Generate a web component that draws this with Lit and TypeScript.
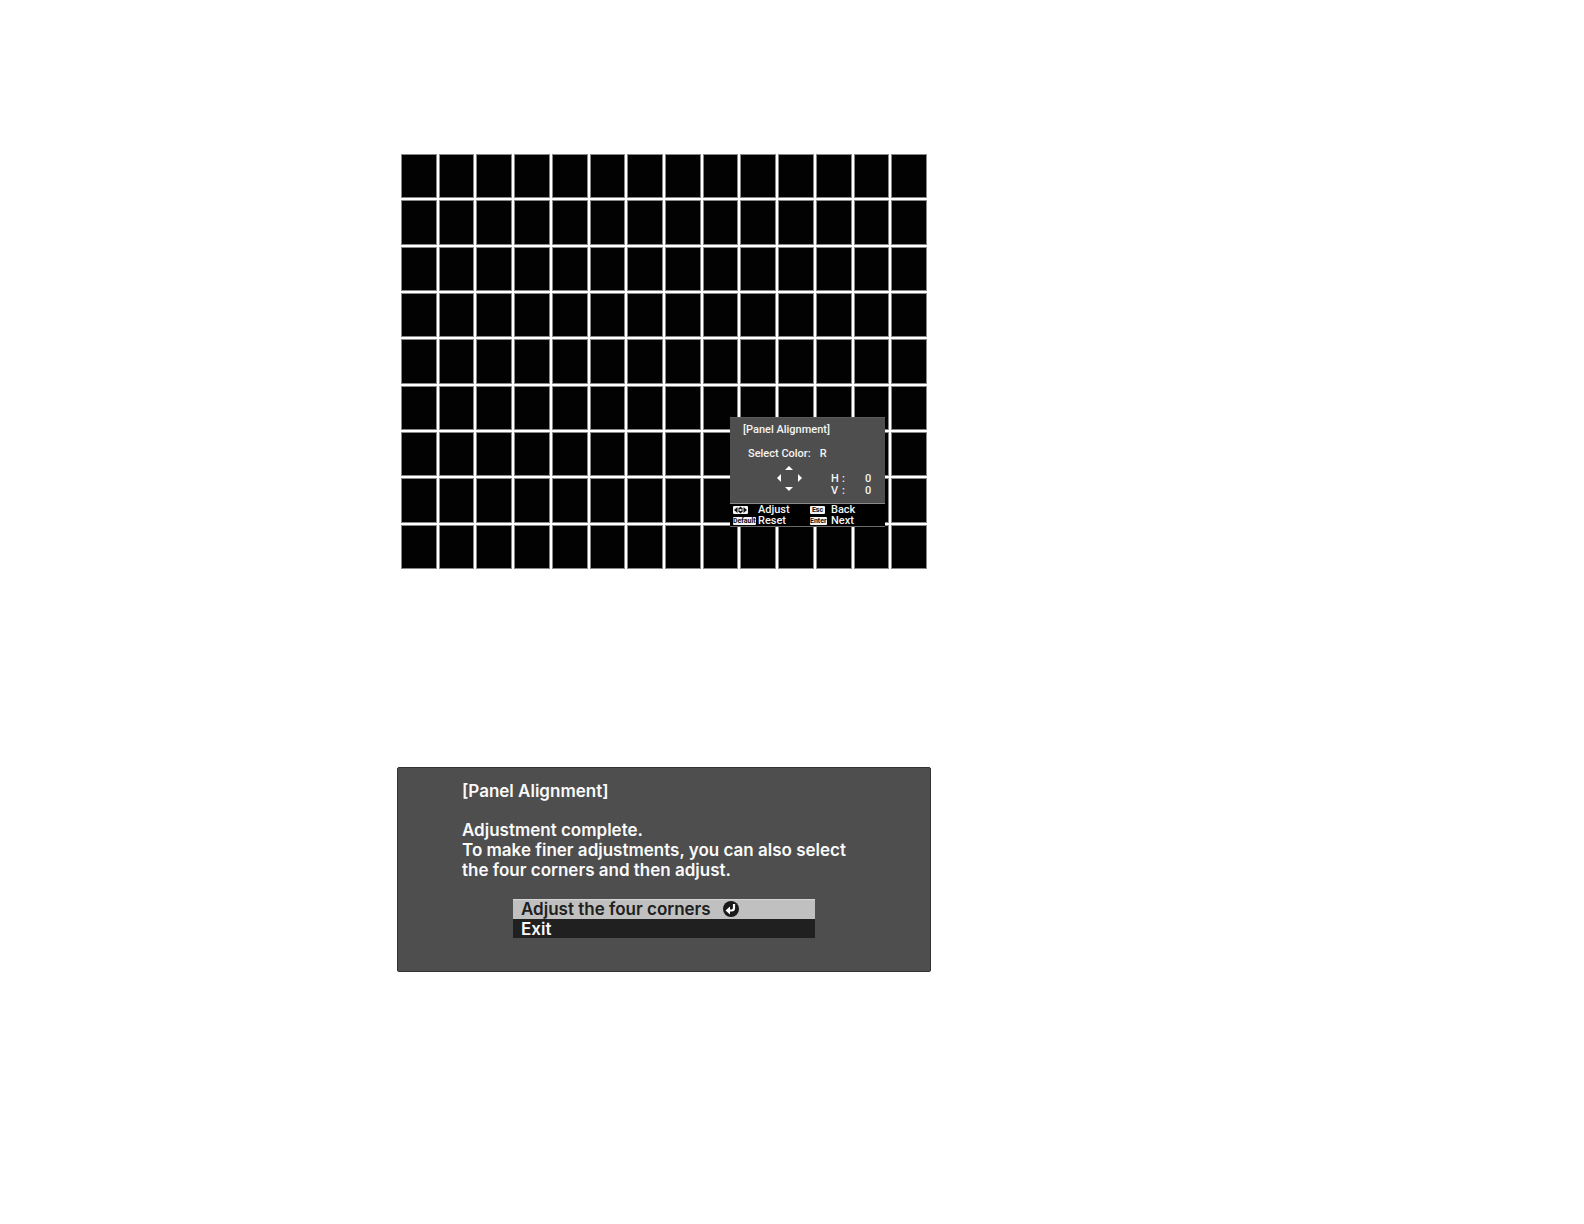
import { LitElement, html, svg, css } from "lit";
import { customElement, state } from "lit/decorators.js";

const COLUMNS = 14;
const ROWS = 9;

@customElement("alignment-panel")
class AlignmentPanel extends LitElement {
  static styles = css`
    :host {
      display: block;
      color: #f4f4f4;
      background: #4e4e4e;
      font: 500 11px/12px Roboto, "Liberation Sans", sans-serif;
    }
    .body {
      padding: 6px 13px 6px 13px;
      border-top: 1px solid #5c5c5c;
    }
    .title {
      margin: 0;
      font: inherit;
    }
    .color {
      margin: 12px 0 4px 5px;
      display: flex;
      gap: 9px;
    }
    .values {
      display: flex;
      justify-content: space-between;
      align-items: flex-end;
      padding-left: 32px;
    }
    .arrows {
      display: block;
      width: 28px;
      height: 28px;
      margin-bottom: 5px;
    }
    .numbers {
      display: grid;
      grid-template-columns: 11px 23px 7px;
      margin: 0;
    }
    .numbers dt,
    .numbers dd {
      margin: 0;
    }
    .keys {
      display: grid;
      grid-template-columns: 77px 1fr;
      grid-template-rows: 12px 10px;
      background: #000;
      border-top: 1px solid #8a8a8a;
      border-bottom: 1px solid #6a6a6a;
      padding-left: 3px;
    }
    .key {
      display: grid;
      grid-template-columns: 25px 1fr;
      align-items: center;
      align-content: center;
    }
    .key.short {
      grid-template-columns: 21px 1fr;
    }
    .cap {
      justify-self: start;
      box-sizing: border-box;
      min-width: 15px;
      height: 8px;
      border-radius: 1px;
      background: #f4f4f4;
      color: #111;
      font: 700 7px/8px Roboto, "Liberation Sans", sans-serif;
      text-align: center;
    }
    .cap svg {
      display: block;
    }
  `;

  render() {
    return html`
      <div class="body">
        <h2 class="title">[Panel Alignment]</h2>
        <div class="color"><span>Select Color:</span><span>R</span></div>
        <div class="values">
          <svg class="arrows" viewBox="0 0 28 28" fill="#fff" aria-hidden="true">
            <path d="M14 2l4 4h-8zM14 27l4-4h-8zM2 14l4-4v8zM27 14l-4-4v8z" />
          </svg>
          <dl class="numbers">
            <dt>H</dt><dd>:</dd><dd>0</dd>
            <dt>V</dt><dd>:</dd><dd>0</dd>
          </dl>
        </div>
      </div>
      <div class="keys">
        <div class="key">
          <span class="cap">
            <svg width="15" height="8" viewBox="0 0 15 8" fill="#111" aria-hidden="true">
              <path d="M1 4l3.500-3v6zM14 4l-3.500-3v6zM7.500 0.500l2.500 2.500h-5zM7.500 7.500l2.500-2.500h-5z" />
              <path d="M5.500 2.500h1v3h-1zM8.500 2.500h1v3h-1z" />
            </svg>
          </span>
          <span>Adjust</span>
        </div>
        <div class="key short"><span class="cap">Esc</span><span>Back</span></div>
        <div class="key"><span class="cap">Default</span><span>Reset</span></div>
        <div class="key short"><span class="cap">Enter</span><span>Next</span></div>
      </div>
    `;
  }
}

@customElement("corner-dialog")
class CornerDialog extends LitElement {
  static options = ["Adjust the four corners", "Exit"];

  @state() private selected = 0;

  static styles = css`
    :host {
      display: block;
      padding: 13px 64px 33px;
      border: 1px solid #333;
      border-radius: 2px;
      background: #4e4e4e;
      color: #fafafa;
      font: 600 17px/20px Inter, "Liberation Sans", sans-serif;
    }
    .title,
    .message {
      margin: 0 0 19px;
      font: inherit;
    }
    .options {
      display: flex;
      flex-direction: column;
      margin: 0 51px;
    }
    .option {
      display: flex;
      align-items: center;
      gap: 12px;
      height: 19px;
      padding: 0 8px;
      border: 0;
      background: #202020;
      color: #fafafa;
      font: inherit;
      text-align: left;
    }
    .option.selected {
      height: 20px;
      background: #c0c0c0;
      box-shadow: inset 0 1px #d4d4d4;
      color: #202020;
    }
  `;

  render() {
    return html`
      <h2 class="title">[Panel Alignment]</h2>
      <p class="message">
        Adjustment complete.<br />To make finer adjustments, you can also select<br />the four
        corners and then adjust.
      </p>
      <div class="options">
        ${CornerDialog.options.map(
          (label, i) => html`
            <button
              class="option ${i === this.selected ? "selected" : ""}"
              @click=${() => (this.selected = i)}
            >
              <span>${label}</span>
              ${i === this.selected ? this.enterIcon() : ""}
            </button>
          `
        )}
      </div>
    `;
  }

  private enterIcon() {
    return html`<svg width="16" height="16" viewBox="0 0 16 16" aria-hidden="true">
      ${svg`<circle cx="8" cy="8" r="8" fill="#181818" />
      <path d="M11 3v4q0 2.500-2.500 2.500h-3" fill="none" stroke="#fff" stroke-width="2.200" />
      <path d="M2.500 9.500l4.500-4v8z" fill="#fff" />`}
    </svg>`;
  }
}

@customElement("app-root")
class AppRoot extends LitElement {
  static styles = css`
    :host {
      display: block;
      min-height: 100vh;
      background: #fff;
    }
    .page {
      display: grid;
      grid-template-columns: 397fr 534fr 653fr;
      row-gap: 198px;
      padding: 154px 0;
    }
    .screen {
      grid-column: 2;
      position: relative;
      margin: 0 4px;
    }
    .pattern {
      display: grid;
      grid-template-columns: repeat(14, 1fr);
      grid-auto-rows: 1fr;
      gap: 2px;
      aspect-ratio: 526 / 415;
    }
    .cell {
      background: #020202;
      border: 1px solid #888;
    }
    .osd {
      position: absolute;
      right: 42px;
      bottom: 42px;
      width: 155px;
    }
    .dialog {
      grid-column: 2;
    }
  `;

  render() {
    return html`
      <main class="page">
        <section class="screen">
          <div class="pattern">
            ${Array.from({ length: COLUMNS * ROWS }, () => html`<div class="cell"></div>`)}
          </div>
          <alignment-panel class="osd"></alignment-panel>
        </section>
        <corner-dialog class="dialog"></corner-dialog>
      </main>
    `;
  }
}
